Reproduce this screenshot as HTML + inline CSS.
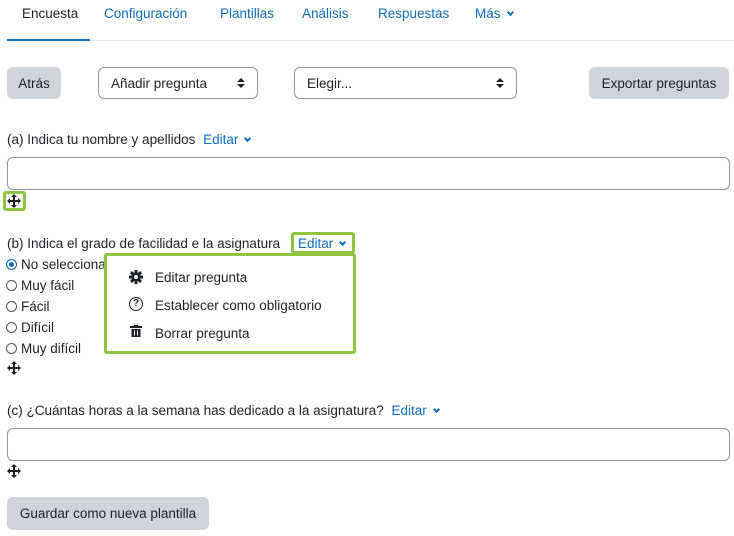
<!DOCTYPE html>
<html><head><meta charset="utf-8"><style>
*{box-sizing:border-box;margin:0;padding:0}
body{width:734px;height:536px;background:#fff;font-family:"Liberation Sans",sans-serif;font-size:13.5px;color:#1d2125;position:relative;overflow:hidden}
.a{position:absolute;white-space:nowrap}
.blue{color:#0f6cbf}
.btn{position:absolute;background:#ced4da;border-radius:6px;display:flex;align-items:center;justify-content:center;color:#1d2125}
.sel{position:absolute;border:1px solid #8f959e;border-radius:6px;padding-left:12px;display:flex;align-items:center}
.sel:after{content:"";position:absolute;right:12px;top:50%;margin-top:-5px;border-left:4px solid transparent;border-right:4px solid transparent;border-bottom:4px solid #1d2125;height:0}
.sel:before{content:"";position:absolute;right:12px;top:50%;margin-top:1px;border-left:4px solid transparent;border-right:4px solid transparent;border-top:4px solid #1d2125;height:0}
.inp{position:absolute;border:1px solid #8f959e;border-radius:6px}
.radio{display:inline-block;width:11px;height:11px;border:1px solid #555;border-radius:50%;margin-right:4px;vertical-align:-1px}
.chev{display:inline-block;width:5px;height:5px;border-right:2px solid #0f6cbf;border-bottom:2px solid #0f6cbf;transform:rotate(45deg);margin-left:7px;vertical-align:3px}
.green{position:absolute;border:3px solid #8dc63f;border-radius:3px}
</style></head><body>
<svg width="0" height="0" style="position:absolute"><defs>
<g id="mv"><path d="M7 0L10 3H8V6H11V4L14 7L11 10V8H8V11H10L7 14L4 11H6V8H3V10L0 7L3 4V6H6V3H4Z" fill="#1d2125"/></g>
</defs></svg>
<div class="a" style="left:22px;top:6px">Encuesta</div>
<div class="a blue" style="left:104px;top:6px">Configuración</div>
<div class="a blue" style="left:220px;top:6px">Plantillas</div>
<div class="a blue" style="left:302px;top:6px">Análisis</div>
<div class="a blue" style="left:378px;top:6px">Respuestas</div>
<div class="a blue" style="left:475px;top:6px">Más<span class="chev"></span></div>
<div class="a" style="left:7px;top:40px;width:727px;height:1px;background:#e5e7ea"></div>
<div class="a" style="left:7px;top:39px;width:83px;height:2px;background:#0f6cbf"></div>

<div class="btn" style="left:7px;top:67px;width:54px;height:32px">Atrás</div>
<div class="sel" style="left:98px;top:67px;width:160px;height:32px">Añadir pregunta</div>
<div class="sel" style="left:294px;top:67px;width:223px;height:32px">Elegir...</div>
<div class="btn" style="left:589px;top:67px;width:140px;height:32px">Exportar preguntas</div>

<div class="a" style="left:7px;top:132px">(a) Indica tu nombre y apellidos <span class="blue" style="margin-left:4px">Editar</span><span class="chev"></span></div>
<div class="inp" style="left:7px;top:157px;width:723px;height:33px"></div>
<div class="green" style="left:3px;top:191px;width:23px;height:20px"></div>
<svg class="a" style="left:7px;top:194px" width="14" height="14"><use href="#mv"/></svg>

<div class="a" style="left:7px;top:236px">(b) Indica el grado de facilidad e la asignatura</div>
<div class="green" style="left:291px;top:232px;width:64px;height:22px"></div>
<div class="a blue" style="left:298px;top:236px">Editar<span class="chev"></span></div>
<div class="a" style="left:6px;top:257px"><span class="radio" style="background:#0f6cbf;border-color:#0f6cbf;box-shadow:inset 0 0 0 2px #fff"></span>No selecciona</div>
<div class="a" style="left:6px;top:278px"><span class="radio"></span>Muy fácil</div>
<div class="a" style="left:6px;top:299px"><span class="radio"></span>Fácil</div>
<div class="a" style="left:6px;top:320px"><span class="radio"></span>Difícil</div>
<div class="a" style="left:6px;top:341px"><span class="radio"></span>Muy difícil</div>
<svg class="a" style="left:7px;top:361px" width="14" height="14"><use href="#mv"/></svg>

<div class="green" style="left:104px;top:253px;width:252px;height:101px;background:#fff"></div>
<svg class="a" style="left:129px;top:270px" width="14" height="14" viewBox="0 0 14 14"><g fill="#1d2125"><circle cx="7" cy="7" r="4.5"/><rect x="5.5" y="0" width="3" height="14"/><rect x="0" y="5.5" width="14" height="3"/><rect x="5.5" y="0" width="3" height="14" transform="rotate(45 7 7)"/><rect x="5.5" y="0" width="3" height="14" transform="rotate(-45 7 7)"/></g><circle cx="7" cy="7" r="2" fill="#fff"/></svg>
<div class="a" style="left:155px;top:270px">Editar pregunta</div>
<div class="a" style="left:129px;top:297px;width:14px;height:14px;border:1.6px solid #1d2125;border-radius:50%;font-size:10px;font-weight:bold;text-align:center;line-height:11px">?</div>
<div class="a" style="left:155px;top:298px">Establecer como obligatorio</div>
<svg class="a" style="left:130px;top:325px" width="12" height="13" viewBox="0 0 12 13"><rect x="0" y="1" width="12" height="2" fill="#1d2125"/><rect x="4" y="0" width="4" height="2" fill="#1d2125"/><path d="M1.5 4H10.5V12H1.5Z" fill="#1d2125"/><rect x="4" y="5.5" width="1" height="5" fill="#fff"/><rect x="7" y="5.5" width="1" height="5" fill="#fff"/></svg>
<div class="a" style="left:155px;top:326px">Borrar pregunta</div>

<div class="a" style="left:7px;top:403px">(c) ¿Cuántas horas a la semana has dedicado a la asignatura? <span class="blue" style="margin-left:4px">Editar</span><span class="chev"></span></div>
<div class="inp" style="left:7px;top:428px;width:723px;height:33px"></div>
<svg class="a" style="left:7px;top:464px" width="14" height="14"><use href="#mv"/></svg>

<div class="btn" style="left:7px;top:497px;width:202px;height:33px">Guardar como nueva plantilla</div>
</body></html>
